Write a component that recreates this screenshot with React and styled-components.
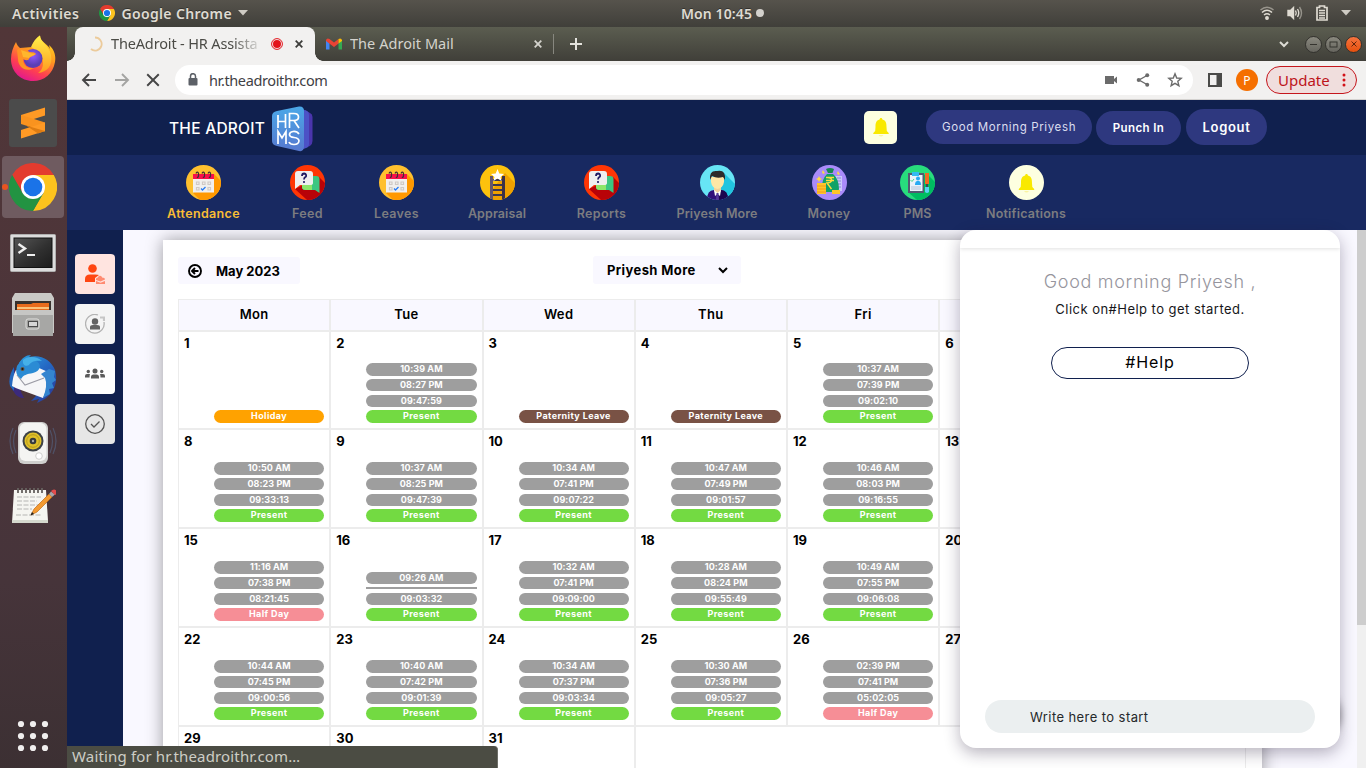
import React from 'react';
import styled, { createGlobalStyle, css } from 'styled-components';

const GlobalStyle = createGlobalStyle`
  * { box-sizing: border-box; }
  html, body { margin: 0; padding: 0; overflow: hidden; }
  body { font-family: Inter, "Open Sans", sans-serif; color: #000; }
`;

const ubuntu = css`font-family: "Noto Sans", "Open Sans", sans-serif;`;

const Screen = styled.div`
  width: 1366px; height: 768px; overflow: hidden;
  display: flex; flex-direction: column; background: #fff;
`;
const Line = styled.span`
  white-space: pre; letter-spacing: ${p => p.$ls || 0}px;
`;

/* ---------- desktop bar ---------- */
const TopBar = styled.div`
  ${ubuntu}
  height: 27px; flex: none; display: grid; grid-template-columns: 669px 1fr auto; align-items: center;
  padding: 0 15px 1px 12px; color: #dfdbd2; font-size: 14px; font-weight: 600;
  background: linear-gradient(#56534c, #403f3a);
  text-shadow: 0 -1px 0 rgba(0,0,0,.35);
`;
const TopGroup = styled.div`
  display: flex; align-items: center; gap: ${p => p.$gap || 0}px; justify-content: ${p => p.$end ? 'flex-end' : 'flex-start'};
`;
const Clock = styled.div`
  display: flex; align-items: center; gap: 4px;
  &::after { content: ''; width: 8px; height: 8px; border-radius: 50%; background: #d3d1cc; }
`;

/* ---------- dock ---------- */
const Below = styled.div`flex: 1; display: flex; min-height: 0;`;
const Dock = styled.div`
  width: 67px; flex: none; display: flex; flex-direction: column;
  background: linear-gradient(#513638, #4c353a 45%, #46343a 75%, #3c3033);
`;
const Slot = styled.div`
  height: 64px; flex: none; display: flex; align-items: center; justify-content: center; position: relative;
  padding-right: 1px; padding-top: ${p => p.$down || 0}px; padding-bottom: ${p => p.$up || 0}px; margin-top: ${p => p.$push ? 'auto' : 0};
`;
const ActiveSlot = styled(Slot)`
  height: 62px; margin: 1px 3px 1px 2px; padding: 0; background: #6f5b60; border-radius: 4px;
  &::before { content: ''; position: absolute; left: 0; top: 28px; width: 6px; height: 6px; border-radius: 50%; background: #e95420; }
`;

/* ---------- browser ---------- */
const Browser = styled.div`flex: 1; display: flex; flex-direction: column; min-width: 0; ${ubuntu}`;
const TabStrip = styled.div`
  height: 34px; flex: none; display: flex; align-items: center; padding: 0 4px 0 8px;
  background: linear-gradient(#5b5d50, #403f39); font-size: 15px;
`;
const Tab = styled.div`
  height: 34px; width: 240px; display: flex; align-items: center; padding: 0 ${p => p.$active ? 12 : 13}px 0 ${p => p.$active ? 14 : 11}px; gap: 8px; position: relative;
  color: ${p => p.$active ? '#4b4b46' : '#d4d3cd'};
  background: ${p => p.$active ? '#f2f1f0' : 'transparent'};
  border-radius: 8px 8px 0 0;
`;
const Corner = styled.i`
  position: absolute; bottom: 0; width: 8px; height: 8px;
  ${p => p.$right ? 'right: -8px;' : 'left: -8px;'}
  background: radial-gradient(circle at ${p => p.$right ? '100% 0' : '0 0'}, transparent 7.5px, #f2f1f0 8px);
`;
const TabTitle = styled.div`
  flex: 1; min-width: 0; white-space: nowrap; overflow: hidden; letter-spacing: ${p => p.$ls || 0}px; font-size: 14.5px; margin-bottom: 2px;
  ${p => p.$fade && css`mask-image: linear-gradient(90deg, #000 80%, transparent);`}
`;
const RecWrap = styled.div`display: flex; margin: 0 4px 0 0;`;
const TabLine = styled.div`width: 1px; height: 20px; background: #87877f; margin-right: 16px; margin-left: -2px;`;
const Controls = styled.div`margin-left: auto; display: flex; align-items: center; > svg { margin-right: 13px; }`;
const WinBtn = styled.div`
  width: 17px; height: 17px; border-radius: 50%; margin-left: 3px; border: 1px solid #33322e;
  display: flex; align-items: center; justify-content: center;
  background: ${p => p.$close ? 'linear-gradient(#f6743f, #e6500e)' : 'linear-gradient(#8a897f, #66655e)'};
`;
const Toolbar = styled.div`
  height: 39px; flex: none; display: flex; align-items: center; background: #f2f1f0; border-bottom: 1px solid #d4d2d0;
  padding: 0 9px 0 14px;
`;
const NavIcons = styled.div`display: flex; flex: none; width: 94px; gap: 16.5px; align-items: center;`;
const Address = styled.div`
  height: 30px; width: 1018px; flex: none; border-radius: 15px; background: #fff; display: flex; align-items: center; color: #3f4145;
  font-size: 14.5px; padding: 0 10px 1px 13px; gap: 11px;
`;
const AddressIcons = styled.div`margin-left: auto; display: flex; gap: 16px; align-items: center; height: 16px;`;
const Avatar = styled.div`
  width: 22px; height: 22px; border-radius: 50%; background: #f56f00; color: #fff; font-size: 12px;
  display: flex; align-items: center; justify-content: center; margin-left: auto; margin-right: 8px;
`;
const PanelWrap = styled.div`display: flex; margin-left: 15px;`;
const Update = styled.div`
  width: 91px; height: 28px; border: 1px solid #c5161d; border-radius: 14px; background: #f0dedd; color: #bd141a;
  display: flex; align-items: center; justify-content: space-between; padding: 0 10px 1px 11px; font-size: 15px;
`;

/* ---------- web page ---------- */
const Page = styled.div`
  flex: 1; position: relative; display: flex; flex-direction: column; min-height: 0; overflow: hidden;
  font-family: Inter, "Open Sans", sans-serif;
`;
const Header = styled.div`
  height: 55px; flex: none; background: #10204e; display: flex; align-items: center; padding: 0 99px 0 102px; color: #fff;
`;
const Brand = styled.div`display: flex; align-items: center; gap: 7px; font-size: 15.5px; font-weight: 500; padding-top: 2px;`;
const HeaderRight = styled.div`margin-left: auto; display: flex; align-items: center;`;
const BellBox = styled.div`
  width: 33px; height: 33px; border-radius: 5px; background: #fdffe0; margin-right: 29px;
  display: flex; align-items: center; justify-content: center;
`;
const PillButton = styled.div`
  width: ${p => p.$w}px; height: ${p => p.$h}px; border-radius: 18px; background: #2e387f; color: ${p => p.$dim ? '#dcdff0' : '#fff'};
  display: flex; align-items: center; justify-content: center; font-size: ${p => p.$size}px; font-weight: ${p => p.$weight};
  margin-left: ${p => p.$ml || 0}px; margin-top: ${p => p.$mt || 0}px;
`;
const Nav = styled.div`
  height: 75px; flex: none; background: #182961; display: flex; padding: 10px 0 0 100px;
`;
const NavItem = styled.div`
  width: ${p => p.$w}px; margin-right: ${p => p.$gap}px; display: flex; flex-direction: column; align-items: center;
  font-size: 12.5px; font-weight: 600; color: ${p => p.$active ? '#f9bd35' : '#7c7c80'};
  svg { flex: none; margin-bottom: 6px; }
`;
const Main = styled.div`flex: 1; display: flex; min-height: 0; background: #f9f8ff;`;
const Side = styled.div`
  width: 56px; flex: none; background: #10204e; display: flex; flex-direction: column; align-items: center; gap: 10px; padding-top: 24px;
`;
const SideButton = styled.div`
  width: 40px; height: 40px; border-radius: 4px; background: ${p => p.$bg}; display: flex; align-items: center; justify-content: center;
`;
const Content = styled.div`flex: 1; overflow: hidden; padding: 10px 95px 0 40px;`;
const Card = styled.div`
  height: 700px; background: #fff; box-shadow: 0 0 16px rgba(0,0,0,.38); padding: 16px 16px 0 15px;
`;
const CardTop = styled.div`display: flex; height: 28px; margin-bottom: 15px;`;
const MonthBox = styled.div`
  width: 122px; height: 27px; margin-top: 1px; background: #f9f8ff; border-radius: 3px; display: flex; align-items: center; padding-left: 10px; gap: 14px;
  font-size: 13px; font-weight: 700;
`;
const UserSelect = styled.div`
  width: 148px; margin-left: 293px; background: #f9f8ff; border-radius: 3px; display: flex; align-items: center; justify-content: space-between;
  padding: 0 13px 0 14px; font-size: 13px; font-weight: 700;
`;
const Calendar = styled.div`
  display: grid; grid-template-columns: repeat(6, 152.25px) 1fr; grid-template-rows: 32px 98px; grid-auto-rows: 99px;
  width: 1068px;
`;
const DayName = styled.div`
  border: 1px solid #ececec; background: #f9f8ff; display: flex; align-items: center; justify-content: center;
  font-size: 13px; font-weight: 600; letter-spacing: .35px; padding-bottom: 2px;
`;
const Day = styled.div`
  border: 1px solid #ececec; padding: 3px 5px 5px; display: flex; flex-direction: column;
  grid-column: span ${p => p.$span || 1};
`;
const DayNumber = styled.div`font-size: 13px; font-weight: 700; line-height: 16px;`;
const Stack = styled.div`margin-top: auto; margin-left: 30px; display: flex; flex-direction: column; gap: 3.1px;`;
const colors = { time: '#9e9e9e', Present: '#73da42', Holiday: '#ffa200', 'Half Day': '#f68e96', 'Paternity Leave': '#795245' };
const Badge = styled.div`
  min-height: ${p => p.$empty ? 2 : 12.7}px; border-radius: ${p => p.$empty ? 0 : 7}px; background: ${p => colors[p.$kind] || colors.time};
  color: #fff; font-size: 9px; font-weight: 700; line-height: 12.7px; text-align: center; white-space: nowrap;
  letter-spacing: ${p => colors[p.$kind] ? .4 : .08}px;
`;
const ScrollTrack = styled.div`width: 9px; flex: none; background: #f0f0f0;`;
const ScrollThumb = styled.div`height: 395px; background: #cdcdcd;`;

/* ---------- overlays ---------- */
const Launcher = styled.div`
  position: absolute; left: 1225px; top: 590px; width: 48px; height: 48px; border-radius: 50%; background: #555; box-shadow: 0 1px 8px rgba(0,0,0,.5);
`;
const Chat = styled.div`
  position: absolute; left: 893px; top: 130px; width: 380px; height: 518px; border-radius: 16px; background: #fff;
  box-shadow: 0 5px 16px rgba(30,20,50,.32); display: flex; flex-direction: column; align-items: center; overflow: hidden;
`;
const ChatHead = styled.div`width: 100%; height: 18px; flex: none; box-shadow: 0 1px 4px rgba(0,0,0,.12);`;
const Greeting = styled.div`margin-top: 22px; font-size: 18px; line-height: 24px; font-weight: 300; letter-spacing: .7px; color: #96959d;`;
const Hint = styled.div`margin-top: 6px; font-size: 13px; line-height: 18px; letter-spacing: .47px; color: #16161a;`;
const HelpButton = styled.div`
  margin-top: 29px; width: 198px; height: 32px; border: 1px solid #10204e; border-radius: 16px; font-size: 16px; line-height: 29px; letter-spacing: .9px; text-align: center;
`;
const Write = styled.div`
  margin-top: auto; margin-bottom: 15px; width: 330px; height: 33px; border-radius: 17px; background: #ebeff0; padding-left: 45px;
  font-size: 13px; line-height: 34px; letter-spacing: .42px; color: #25282a;
`;
const Status = styled.div`
  ${ubuntu}
  position: absolute; left: 0; bottom: 0; width: 431px; height: 22px; background: #4b4c43; border-right: 1px solid #6d6e67;
  border-radius: 0 4px 0 0; color: #cecec6; font-size: 15px; line-height: 21px; letter-spacing: .16px; padding-left: 5px;
`;

/* ---------- drawings ---------- */
const Chrome = ({ s }) => (
  <svg width={s} height={s} viewBox="0 0 48 48">
    <path d="M3.2 12A24 24 0 0 1 44.8 12H24L13.6 30Z" fill="#e33b2e" />
    <path d="M44.8 12A24 24 0 0 1 24 48L34.4 30L24 12Z" fill="#fcc31e" />
    <path d="M24 48A24 24 0 0 1 3.2 12L13.6 30L34.4 30Z" fill="#229342" />
    <circle cx="24" cy="24" r="12" fill="#fff" /><circle cx="24" cy="24" r="9.3" fill="#1a73e8" />
  </svg>
);
const Firefox = () => (
  <svg width="46" height="48" viewBox="0 0 46 48">
    <defs>
      <linearGradient id="ff1" x1=".8" y1="0" x2=".3" y2="1"><stop offset="0" stopColor="#ffe226" /><stop offset=".4" stopColor="#ff9a1f" /><stop offset=".72" stopColor="#ff4050" /><stop offset="1" stopColor="#e01692" /></linearGradient>
      <radialGradient id="ff2" cy=".35"><stop offset="0" stopColor="#9059ff" /><stop offset="1" stopColor="#5b3fb5" /></radialGradient>
      <linearGradient id="ff3" x2="0" y2="1"><stop stopColor="#fff14a" /><stop offset="1" stopColor="#ff9a1f" /></linearGradient>
    </defs>
    <path d="M1 24C1 18 3 12 6 7C7 10 8 11 10 13L22 12C23 8 26 3 30 .5C30 7 38 9 40 14L39 10C45 15 46 22 45 27C43 39 34 46 23 46C11 46 1 37 1 24Z" fill="url(#ff1)" />
    <path d="M21 12C23 7 26 3 30 .5C30 7 39 10 41 20C43 31 37 37 28 38C36 33 34 20 26 15Z" fill="url(#ff3)" />
    <circle cx="23" cy="23.500" r="9.500" fill="url(#ff2)" />
    <path d="M7 15C10 12 16 13 18 16C20 18 24 16 26 19C24 21 20 21 19 24C18 26 14 25 13 24C13 30 18 34 24 33C16 38 8 32 8 24Z" fill="#ff9324" />
    <path d="M11 15L20 18L25 19C24 21 20 21 19 23L13 22Z" fill="#ffb72d" />
  </svg>
);
const Sublime = () => (
  <svg width="48" height="48" viewBox="0 0 48 48">
    <rect width="48" height="48" rx="3" fill="#4b4b4b" />
    <path d="M12 16L36 8.500V16.500L12 24Z" fill="#ff9a25" /><path d="M12 16V25L36 32.500V23.500L25 20Z" fill="#f9931f" />
    <path d="M12 31L36 23.500V32L12 39.500Z" fill="#ff9a25" /><path d="M17 26.500L36 32L29 34.500Z" fill="#dd7c12" />
  </svg>
);
const Terminal = () => (
  <svg width="46" height="38" viewBox="0 0 46 38">
    <defs><linearGradient id="term" x2="1" y2="1"><stop stopColor="#555" /><stop offset=".55" stopColor="#303030" /><stop offset="1" stopColor="#1b1b1b" /></linearGradient></defs>
    <rect x=".5" y=".5" width="45" height="37" rx="1" fill="#dcdcdc" stroke="#b0b0b0" />
    <rect x="4" y="4" width="38" height="29.500" fill="url(#term)" stroke="#111" />
    <path d="M8.500 10L15 14.500L8.500 19" fill="none" stroke="#eee" strokeWidth="2.400" /><path d="M17 21H25" stroke="#eee" strokeWidth="2" />
  </svg>
);
const Files = () => (
  <svg width="44" height="44" viewBox="0 0 44 44">
    <path d="M4 0H40L43 5V40H1V5Z" fill="#c9c9c6" /><rect x="4" y="8" width="36" height="12" fill="#38322e" />
    <path d="M6 11H20L22 10H38V19H6Z" fill="#e86b1c" /><path d="M6 15H38" stroke="#ffdf9a" strokeWidth="1.500" />
    <path d="M2 17H42V43H2Z" fill="#a7a7a5" /><path d="M2 17H42V22H2Z" fill="#c6c6c4" />
    <rect x="15" y="26" width="13" height="10" rx="2" fill="#a0a09e" stroke="#e0e0de" /><rect x="17.500" y="28.500" width="9" height="5" fill="#d6d6d6" stroke="#4b4b4b" />
  </svg>
);
const Thunderbird = () => (
  <svg width="48" height="48" viewBox="0 0 48 48">
    <defs><linearGradient id="tb" x2=".7" y2="1"><stop stopColor="#2a9fe0" /><stop offset=".5" stopColor="#2468c4" /><stop offset="1" stopColor="#293f9d" /></linearGradient></defs>
    <path d="M5 12C1 20-1 30 5 37C7 41 11 43 15 43L12 37Z" fill="#3b2a7c" />
    <path d="M10 8C13 3 17 0 22 0L20 2C32-1 42 5 46 15C50 29 43 40 34 45L28 48L30 44L22 46L27 41Z" fill="url(#tb)" />
    <path d="M5 12C2 17-1 24 1 31L5 36V15Z" fill="#2467bd" />
    <path d="M3 31Q4 20 7 15L14 17L30 13L39 17Q40 31 34 43L12 35Q6 33 3 31Z" fill="#f6f6f8" />
    <path d="M8 20L16 30L35 23" fill="none" stroke="#9b9ba5" strokeWidth="1.100" />
    <path d="M8 11C12 3 22 3 27 6C33 9 32 16 24 18C18 19 14 20 12 24C8 21 6 17 8 11Z" fill="#2b8bd4" />
    <path d="M14 5C18 1 28 1 33 6C28 5 22 6 20 10C17 12 13 10 14 5Z" fill="#46b0e8" /><circle cx="13.500" cy="14" r="2" fill="#6d5539" /><circle cx="13.500" cy="14" r="1" fill="#15181f" />
    <path d="M32 19L40 14L46 16L45 22L47 25L43 28L45 33L40 34L41 39L34 43Q39 30 36 23Z" fill="#3485cf" />
  </svg>
);
const Speaker = () => (
  <svg width="48" height="44" viewBox="0 0 48 44">
    <path d="M7 9Q2 20 7 32M4 7Q-2 20 4 33M41 9Q46 20 41 32M44 7Q50 20 44 33" fill="none" stroke="#55698c" strokeWidth="1.200" opacity=".55" />
    <rect x="9" y="1" width="30" height="42" rx="6" fill="#cfcfcd" /><rect x="10.500" y="2" width="27" height="38" rx="6" fill="#f4f4f2" />
    <circle cx="24" cy="20" r="10.500" fill="#3d4247" /><circle cx="24" cy="20" r="8.500" fill="#e0c02a" /><circle cx="24" cy="20" r="6.300" fill="none" stroke="#b59a1c" />
    <circle cx="24" cy="20" r="3.300" fill="#35393d" /><circle cx="24" cy="20" r="1.200" fill="#aaa" /><circle cx="30" cy="35" r="3.300" fill="#fff" stroke="#d0d0ce" />
  </svg>
);
const Notepad = () => (
  <svg width="46" height="38" viewBox="0 0 46 38">
    <path d="M4 3H36L38 34V36H2Z" fill="#f5f5f1" /><path d="M2 33H38V36H2Z" fill="#d4d8cd" />
    <path d="M8 1V6M12 1V6M16 1V6M20 1V6M24 1V6M28 1V6M32 1V6" stroke="#66625f" strokeWidth="1.800" />
    <path d="M7 10H31M7 14H27M7 18H29M7 22H22M6 28H31" stroke="#b5b5b3" strokeDasharray="5 1.500" />
    <path d="M21 28L24 22L39 7L42 10L27 25Z" fill="#f49a30" stroke="#c26b16" strokeWidth=".7" /><path d="M39 7L41 4.500L45 7.500L42 10Z" fill="#a5a5a8" /><path d="M41 4Q44 1 47 4V7L45 8Z" fill="#e34b4b" /><path d="M20.500 28.500L22 25L24 27Z" fill="#222" />
  </svg>
);
const Apps = () => (
  <svg width="32" height="32" viewBox="0 0 32 32">{[4, 16, 28].map(y => [4, 16, 28].map(x => <circle key={`${x}-${y}`} cx={x} cy={y} r="3.100" fill="#f0eeee" />))}</svg>
);
const Cross = ({ c = '#3d3d3a', s = 8, w = 1.8 }) => <svg width={s} height={s} viewBox="0 0 8 8"><path d="M.7.7L7.300 7.300M7.300.7L.7 7.300" stroke={c} strokeWidth={w} /></svg>;
const Caret = () => <svg width="10" height="6"><path d="M0 0H10L5 5.500Z" fill="#cfccc4" /></svg>;
const Wifi = () => (
  <svg width="14" height="14" viewBox="0 0 14 14" fill="none" stroke="#dfdbd2" strokeWidth="1.500"><path d="M.5 4Q7-1.500 13.500 4" opacity=".5" /><path d="M2 6.500Q7 2 12 6.500M4 9Q7 6.500 10 9" /><circle cx="7" cy="12" r="1.200" fill="#dfdbd2" /></svg>
);
const Volume = () => (
  <svg width="16" height="14" viewBox="0 0 16 14" fill="none" stroke="#dfdbd2" strokeWidth="1.400"><path d="M1 4.500H3.500L6.500 1.500V12.500L3.500 9.500H1Z" fill="#dfdbd2" /><path d="M8.500 4.500Q10 7 8.500 9.500M10.500 3Q13 7 10.500 11" /><path d="M12.500 1Q16.500 7 12.500 13" opacity=".5" /></svg>
);
const Battery = () => (
  <svg width="12" height="16" viewBox="0 0 12 16"><path d="M1 2.500H3.500V1H8.500V2.500H11V15H1Z" fill="none" stroke="#dfdbd2" strokeWidth="1.700" /><path d="M3 5.500H9M3 8H9M3 10.500H9M3 13H9" stroke="#dfdbd2" strokeWidth="1.300" /></svg>
);
const Spinner = () => <svg width="14" height="16" viewBox="0 0 14 16"><path d="M6 1.500A6.500 6.500 0 1 1 2 13" fill="none" stroke="#eccb9b" strokeWidth="1.800" /></svg>;
const Gmail = () => (
  <svg width="16" height="12" viewBox="0 0 16 12"><path d="M0 2V11.500H3.500V5Z" fill="#4285f4" /><path d="M16 2V11.500H12.500V5Z" fill="#34a853" /><path d="M0 2Q1-.5 3.500 1L8 4.500L12.500 1V5.500L8 9L0 3Z" fill="#ea4335" /><path d="M12.500 1Q15-.5 16 2V3L12.500 5.500Z" fill="#fbbc04" /></svg>
);
const Rec = () => <svg width="12" height="12"><circle cx="6" cy="6" r="5.400" fill="none" stroke="#e3141b" /><circle cx="6" cy="6" r="4" fill="#e3141b" /></svg>;
const Arrow = ({ flip }) => <svg width="16" height="16" viewBox="0 0 16 16"><path d={flip ? 'M1 8H14M8 2L14 8L8 14' : 'M15 8H2M8 2L2 8L8 14'} fill="none" stroke={flip ? '#a4a4a2' : '#464646'} strokeWidth="1.900" /></svg>;
const Lock = () => <svg width="10" height="13" viewBox="0 0 10 13"><rect x=".5" y="5" width="9" height="7.500" rx="1" fill="#5c6067" /><path d="M2.500 5V3.200A2.500 2.500 0 0 1 7.500 3.200V5" fill="none" stroke="#5c6067" strokeWidth="1.500" /></svg>;
const Camera = () => <svg width="16" height="16"><path d="M2 4H11V7L14 4.500V11.500L11 9V12H2Z" fill="#6b6b6b" /></svg>;
const Share = () => <svg width="16" height="16"><path d="M12 3.500L4 8L12 12.500" fill="none" stroke="#6b6b6b" strokeWidth="1.400" /><circle cx="12.200" cy="3.200" r="2" fill="#6b6b6b" /><circle cx="3.700" cy="8" r="2" fill="#6b6b6b" /><circle cx="12.200" cy="12.800" r="2" fill="#6b6b6b" /></svg>;
const StarOutline = () => <svg width="16" height="16"><path d="M8 1.800L9.700 6L14.200 6.400L10.800 9.300L11.900 13.700L8 11.300L4.100 13.700L5.200 9.300L1.800 6.400L6.300 6Z" fill="none" stroke="#6b6b6b" strokeWidth="1.400" /></svg>;
const Panel = () => <svg width="14" height="14"><rect x="1" y="1" width="12" height="12" fill="none" stroke="#4b4b49" strokeWidth="2" /><path d="M8.500 0H14V14H8.500Z" fill="#4b4b49" /></svg>;
const Kebab = () => <svg width="4" height="14"><g fill="#d21118"><circle cx="2" cy="2" r="1.500" /><circle cx="2" cy="7" r="1.500" /><circle cx="2" cy="12" r="1.500" /></g></svg>;
const Bell = ({ x = 0, y = 0 }) => (
  <g transform={`translate(${x} ${y})`}><path d="M8 0C9 0 9.200.7 9.400 1.500C13 2.500 13.500 5 13.500 9L13.800 13L15.700 15V16H.3V15L2.200 13L2.500 9C2.500 5 3 2.500 6.600 1.500C6.800.7 7 0 8 0Z" fill="#f9e900" /><path d="M5.500 17H10.500Q8 20 5.500 17Z" fill="#faf3a0" /></g>
);
const HrmsLogo = () => (
  <svg width="42" height="46" viewBox="0 0 42 46">
    <defs><linearGradient id="hr" x2="0" y2="1"><stop stopColor="#4ba8e8" /><stop offset="1" stopColor="#5678cf" /></linearGradient></defs>
    <path d="M33 4L38 7Q40.500 8 40.500 11V35Q40.500 38 38 40L32 42Z" fill="#4a35ac" /><path d="M30 3L35 5Q37 6 37 9V38Q37 41 34 42L29 44Z" fill="#4c52c6" />
    <path d="M5 5L27 .5Q32 0 32 5V40Q32 46 27 45L5 40Q0 39 0 35V10Q0 6 5 5Z" fill="url(#hr)" />
    <g fill="none" stroke="#fff" strokeWidth="1.700"><path d="M6 9V22M13.500 8V22M6 15.500H13.500M17.500 22V7.500H22Q26.500 7.500 26.500 11Q26.500 14.500 22 14.500H17.500M22 14.500L27 22M6 38V25.500L10 32L14 25.500V38M27 28Q25 25 21 25.500Q17.500 26 17.500 28.500Q17.500 31 22 31.500Q27 32 27 35Q26.500 38.500 22 38.500Q18 38.500 17 36" /></g>
  </svg>
);
const Round = ({ bg, shade, children }) => (
  <svg width="35" height="35" viewBox="0 0 35 35"><defs><clipPath id="disc"><circle cx="17.500" cy="17.500" r="17.500" /></clipPath></defs><g clipPath="url(#disc)"><rect width="35" height="35" fill={bg} />{shade && <path d={shade[1]} fill={shade[0]} />}{children}</g></svg>
);
const CalendarIcon = () => (
  <Round bg="#ffc02e" shade={['#ff9800', 'M28 9L35 16V35H14L7 28Z']}>
    <rect x="7" y="12" width="21" height="15.500" fill="#f1efed" /><path d="M7 9H28V14H7Z" fill="#f80f4c" />
    <path d="M10 8.500Q11 6 12.500 8V11Q12 13 11 12M16 8.500Q17 6 18.500 8V11Q18 13 17 12M22 8.500Q23 6 24.500 8V11Q24 13 23 12" stroke="#402f35" strokeWidth="1.200" fill="none" />
    <g fill="none" stroke="#cfc9c5" strokeWidth="1.200"><path d="M10.500 17H13V19.500H10.500ZM16.500 17H19V19.500H16.500ZM22 17H24.500V19.500H22ZM10.500 22.500H13V25H10.500ZM22 22.500H24.500V25H22Z" /></g><path d="M15 23.500L16.500 25L19.500 22" stroke="#287cf4" fill="none" strokeWidth="1.300" />
  </Round>
);
const QuestionIcon = () => (
  <Round bg="#ff3605" shade={['#b80308', 'M29 12L35 18V35H17L5 24Z']}>
    <path d="M15 11H26Q29.500 11 29.500 14V28L25 25H15Q12 25 12 22V20Z" fill="#3cc681" /><path d="M12 19H22V25H16Q12 25 12 22Z" fill="#8de66a" />
    <path d="M8 6H20Q23 6 23 9V18Q23 20 20 20H10L5 24V9Q5 6 8 6Z" fill="#efefef" />
    <path d="M12 11Q12 8.500 14.200 8.500Q16.700 9 16 11.500Q14 12.500 14 14.500" fill="none" stroke="#221c64" strokeWidth="1.800" /><circle cx="14" cy="17" r="1.100" fill="#221c64" />
  </Round>
);
const LadderIcon = () => (
  <Round bg="#fdc20d" shade={['#efa000', 'M25 8L35 18V35H13L12 25Z']}>
    <path d="M11.500 11V35" stroke="#66566a" strokeWidth="3" /><path d="M23.500 11V35" stroke="#3c3048" strokeWidth="3" /><path d="M13 15H22M13 20H22M13 25H22M13 30H22" stroke="#3c3650" strokeWidth="2" />
    <path d="M17.500 4L19.300 8.500L24 9L20.500 12L21.600 16L17.500 13.500L13.400 16L14.500 12L11 9L15.700 8.500Z" fill="#fff" />
  </Round>
);
const PersonIcon = () => (
  <Round bg="#67e5f5" shade={['#21c5df', 'M24 8L35 19V35H18Z']}>
    <path d="M7 35Q7 25 14 25L17.500 28L21 25Q28 25 28 35Z" fill="#301078" /><path d="M17.500 28L21 25Q28 25 28 35H18Z" fill="#1c064f" />
    <path d="M14 22H21V26L17.500 29L14 26Z" fill="#f1d29d" /><path d="M11 12H24V17Q23 23 17.500 24Q12 23 11 17Z" fill="#ffe7a6" />
    <path d="M10 15Q9 5 17 6Q26 4 25 15L23 12Q17 14 12 11Z" fill="#2d2b2b" /><path d="M14 25L17.500 28L21 25L20 31L17.500 29L15 31Z" fill="#fff" /><path d="M16.500 28H18.500L19 35H16Z" fill="#55399a" />
  </Round>
);
const MoneyIcon = () => (
  <Round bg="#a98bfa">
    <path d="M22 11H30V26H22Z" fill="#c9c8fa" /><path d="M25 13H29M25 16H29M25 19H29M25 22H29" stroke="#8c86d8" /><path d="M15 9H21Q27 14 27 24Q27 27 21 27H15Q10 27 10 22Q10 14 15 9Z" fill="#10a267" /><path d="M14 4Q18 2 22 4L20.500 8H16Z" fill="#17884f" />
    <path d="M5 18H14V29H5Z" fill="#ffc52a" /><path d="M5 21H14M5 24H14M5 27H14" stroke="#f39a19" /><path d="M20 25H28V29H20Z" fill="#ffc52a" />
    <path d="M14 12.500H22M14 15.500H22M15 12.500Q20.500 12.500 19.500 16Q18.500 18 15 18L19.500 24" stroke="#ffdd3f" fill="none" strokeWidth="1.400" />
    <path d="M7 11L8 13L10 14L8 15L7 17L6 15L4 14L6 13ZM11 5L12 7L13 8L11 9L10 7ZM26 6L27 8L28 9L26 10L25 8Z" fill="#ffdd3f" />
  </Round>
);
const PmsIcon = () => (
  <Round bg="#28dc7d" shade={['#00bd61', 'M26 8L35 17V35H17L8 27Z']}>
    <rect x="8" y="8" width="16" height="20" fill="#535a71" /><rect x="10" y="10" width="12.500" height="16" fill="#eaf2fa" /><path d="M12 7H19V11H12Z" fill="#34baf2" />
    <circle cx="18" cy="13.500" r="2" fill="#28aaf3" /><path d="M15 20Q15 15.500 18 16Q21 15.500 21 20Z" fill="#28aaf3" /><path d="M10.500 15L12 16.500L14 14" stroke="#48d58a" fill="none" /><path d="M11 22H21M11 24H21" stroke="#b4c2d8" />
    <path d="M25 8H29V19H25Z" fill="#f06a23" /><path d="M26 19H28V22H26Z" fill="#445" /><path d="M25 22H29V27Q27 29 25 27Z" fill="#5bd0f2" />
  </Round>
);
const NotificationIcon = () => <Round bg="#fdffe0"><Bell x={9.5} y={9} /></Round>;
const BackCircle = () => <svg width="14" height="14"><circle cx="7" cy="7" r="6" fill="none" stroke="#000" strokeWidth="1.900" /><path d="M10.500 7H4M7 4L4 7L7 10" fill="none" stroke="#000" strokeWidth="1.900" /></svg>;
const Chevron = ({ c = '#000', w = 2 }) => <svg width="10" height="7"><path d="M1 1L5 5L9 1" fill="none" stroke={c} strokeWidth={w} /></svg>;
const UserBag = () => <svg width="20" height="20"><circle cx="7.500" cy="4.500" r="4.300" fill="#ff4613" /><path d="M0 18V15Q0 10.500 5 10.500H10Q13 10.500 14 11L10 14V18Z" fill="#ff4613" /><path d="M11 16V15Q11 13.500 13 13.500V13Q15 10.500 17 13V13.500Q20 13.500 20 15.500L15.500 17.500ZM11 17L15.500 18.800L20 17V20H11Z" fill="#ff8b72" /></svg>;
const UserCycle = () => <svg width="20" height="20"><path d="M13 1A9.300 9.300 0 1 0 19 8" fill="none" stroke="#b3b3b3" strokeWidth="1.300" /><path d="M15 3.500H19V7" fill="none" stroke="#c6c6c6" strokeWidth="2.200" /><circle cx="10" cy="7.500" r="3.200" fill="#636363" /><path d="M5 15.500V13Q5 11 8 11H12Q15 11 15 13V15.500Z" fill="#636363" /></svg>;
const Group = () => <svg width="20" height="12"><g fill="#5b5b5b"><circle cx="10" cy="3" r="2.500" /><circle cx="3.300" cy="3.500" r="1.700" /><circle cx="16.700" cy="3.500" r="1.700" /><path d="M6 10.500V9Q6 6.500 8.500 6.500H11.500Q14 6.500 14 9V10.500ZM0 9.500V8Q0 6 2 6H5Q4.500 7 4.500 9.500ZM20 9.500V8Q20 6 18 6H15Q15.500 7 15.500 9.500Z" /></g></svg>;
const CheckCircle = () => <svg width="22" height="22"><circle cx="11" cy="11" r="9.300" fill="none" stroke="#555" strokeWidth="1.300" /><path d="M7 11L10 14L15.500 8.500" fill="none" stroke="#555" strokeWidth="1.300" /></svg>;

/* ---------- data ---------- */
const navItems = [
  ['Attendance', 73, 52, CalendarIcon], ['Feed', 31, 52, QuestionIcon], ['Leaves', 43, 50, CalendarIcon],
  ['Appraisal', 58, 51, LadderIcon, 0.1], ['Reports', 49, 50, QuestionIcon], ['Priyesh More', 82, 50, PersonIcon, 0.1],
  ['Money', 42, 54, MoneyIcon], ['PMS', 27, 55, PmsIcon, 0.1], ['Notifications', 80, 0, NotificationIcon, 0.2],
];
const P = 'Present';
const weeks = [
  [['Holiday'], ['10:39 AM', '08:27 PM', '09:47:59', P], ['Paternity Leave'], ['Paternity Leave'], ['10:37 AM', '07:39 PM', '09:02:10', P]],
  [['10:50 AM', '08:23 PM', '09:33:13', P], ['10:37 AM', '08:25 PM', '09:47:39', P], ['10:34 AM', '07:41 PM', '09:07:22', P], ['10:47 AM', '07:49 PM', '09:01:57', P], ['10:46 AM', '08:03 PM', '09:16:55', P]],
  [['11:16 AM', '07:38 PM', '08:21:45', 'Half Day'], ['09:26 AM', '', '09:03:32', P], ['10:32 AM', '07:41 PM', '09:09:00', P], ['10:28 AM', '08:24 PM', '09:55:49', P], ['10:49 AM', '07:55 PM', '09:06:08', P]],
  [['10:44 AM', '07:45 PM', '09:00:56', P], ['10:40 AM', '07:42 PM', '09:01:39', P], ['10:34 AM', '07:37 PM', '09:03:34', P], ['10:30 AM', '07:36 PM', '09:05:27', P], ['02:39 PM', '07:41 PM', '05:02:05', 'Half Day']],
  [[], [], []],
];

export default function App() {
  return (
    <Screen>
      <GlobalStyle />
      <TopBar>
        <TopGroup $gap={20}><Line $ls={0.5}>Activities</Line><TopGroup $gap={6}><Chrome s={16} /><Line $ls={0.35}>Google Chrome</Line><Caret /></TopGroup></TopGroup>
        <Clock><Line $ls={0.1}>Mon 10:45</Line></Clock>
        <TopGroup $gap={13} $end><Wifi /><Volume /><Battery /><Caret /></TopGroup>
      </TopBar>
      <Below>
        <Dock>
          <Slot><Firefox /></Slot><Slot><Sublime /></Slot><ActiveSlot><Chrome s={48} /></ActiveSlot>
          <Slot $down={4}><Terminal /></Slot><Slot $up={1}><Files /></Slot><Slot><Thunderbird /></Slot><Slot><Speaker /></Slot><Slot $up={2}><Notepad /></Slot>
          <Slot $push><Apps /></Slot>
        </Dock>
        <Browser>
          <TabStrip>
            <Tab $active><Corner /><Corner $right /><Spinner /><TabTitle $fade $ls={-0.15}>TheAdroit - HR Assista</TabTitle><RecWrap><Rec /></RecWrap><Cross /></Tab>
            <Tab><Gmail /><TabTitle $ls={0.05}>The Adroit Mail</TabTitle><Cross c="#d4d3cd" /></Tab>
            <TabLine />
            <svg width="12" height="12"><path d="M6 0V12M0 6H12" stroke="#e4e3dd" strokeWidth="2" /></svg>
            <Controls>
              <Chevron c="#dddcd5" />
              <WinBtn><svg width="9" height="9"><path d="M1 4.500H8" stroke="#35342f" /></svg></WinBtn>
              <WinBtn><svg width="9" height="9"><rect x="1" y="2" width="7" height="5" fill="none" stroke="#35342f" /></svg></WinBtn>
              <WinBtn $close><Cross s={6} c="#5c240c" w={1.3} /></WinBtn>
            </Controls>
          </TabStrip>
          <Toolbar>
            <NavIcons><Arrow /><Arrow flip /><Cross s={14} c="#464646" w={1.1} /></NavIcons>
            <Address><Lock /><Line $ls={-0.37}>hr.theadroithr.com</Line><AddressIcons><Camera /><Share /><StarOutline /></AddressIcons></Address>
            <PanelWrap><Panel /></PanelWrap><Avatar>P</Avatar>
            <Update><Line>Update</Line><Kebab /></Update>
          </Toolbar>
          <Page>
            <Header>
              <Brand><Line $ls={0.25}>THE ADROIT</Line><HrmsLogo /></Brand>
              <HeaderRight>
                <BellBox><svg width="16" height="19"><Bell /></svg></BellBox>
                <PillButton $w={166} $h={34} $size={11.5} $weight={400} $dim $mt={-1}><Line $ls={0.63}>Good Morning Priyesh</Line></PillButton>
                <PillButton $w={85} $h={34} $size={11.5} $weight={600} $ml={4} $mt={1}><Line $ls={0.4}>Punch In</Line></PillButton>
                <PillButton $w={81} $h={36} $size={13} $weight={600} $ml={5} $mt={-1}><Line $ls={0.7}>Logout</Line></PillButton>
              </HeaderRight>
            </Header>
            <Nav>
              {navItems.map(([label, w, gap, Icon, ls = 0.35], i) => (
                <NavItem key={label} $w={w} $gap={gap} $active={i === 0}><Icon /><Line $ls={ls}>{label}</Line></NavItem>
              ))}
            </Nav>
            <Main>
              <Side>
                <SideButton $bg="#ffe4e0"><UserBag /></SideButton><SideButton $bg="#f4f4f4"><UserCycle /></SideButton>
                <SideButton $bg="#fefefe"><Group /></SideButton><SideButton $bg="#e6e6e6"><CheckCircle /></SideButton>
              </Side>
              <Content>
                <Card>
                  <CardTop>
                    <MonthBox><BackCircle /><Line>May 2023</Line></MonthBox>
                    <UserSelect><Line $ls={0.4}>Priyesh More</Line><Chevron /></UserSelect>
                  </CardTop>
                  <Calendar>
                    {['Mon', 'Tue', 'Wed', 'Thu', 'Fri', 'Sat', 'Sun'].map(d => <DayName key={d}>{d}</DayName>)}
                    {weeks.map((week, w) => (
                      <React.Fragment key={w}>
                        {week.map((items, d) => (
                          <Day key={d}>
                            <DayNumber>{w * 7 + d + 1}</DayNumber>
                            <Stack>{items.map((t, i) => <Badge key={i} $kind={t} $empty={!t}>{t}</Badge>)}</Stack>
                          </Day>
                        ))}
                        {w < 4 ? [6, 7].map(n => <Day key={n}><DayNumber>{w * 7 + n}</DayNumber></Day>) : <Day $span={4} />}
                      </React.Fragment>
                    ))}
                  </Calendar>
                </Card>
              </Content>
              <ScrollTrack><ScrollThumb /></ScrollTrack>
            </Main>
            <Launcher />
            <Chat>
              <ChatHead />
              <Greeting>Good morning Priyesh ,</Greeting>
              <Hint>Click on#Help to get started.</Hint>
              <HelpButton>#Help</HelpButton>
              <Write>Write here to start</Write>
            </Chat>
            <Status>Waiting for hr.theadroithr.com…</Status>
          </Page>
        </Browser>
      </Below>
    </Screen>
  );
}
